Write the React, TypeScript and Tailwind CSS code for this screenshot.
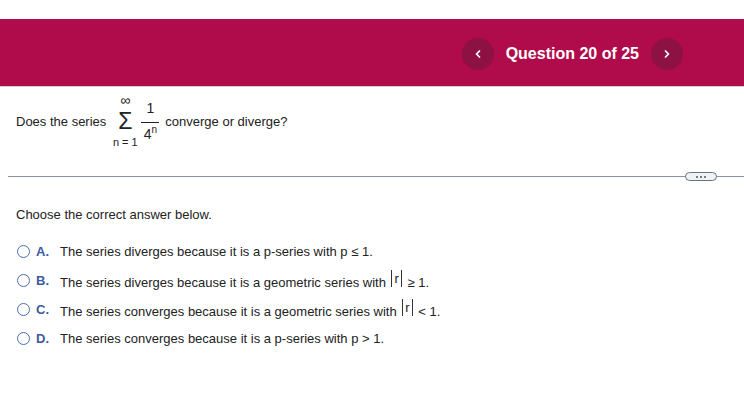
import { ChevronLeft, ChevronRight } from "lucide-react";

const options = [
    { letter: "A.", text: <>The series diverges because it is a p-series with p ≤ 1.</> },
    { letter: "B.", text: <>The series diverges because it is a geometric series with <Abs /> ≥ 1.</> },
    { letter: "C.", text: <>The series converges because it is a geometric series with <Abs /> &lt; 1.</> },
    { letter: "D.", text: <>The series converges because it is a p-series with p &gt; 1.</> },
];

function Abs() {
    return (
        <span className="inline-flex items-center">
            <span className="inline-block w-px h-[17px] bg-[#333] mx-[2px]" />
            r
            <span className="inline-block w-px h-[17px] bg-[#333] mx-[2px]" />
        </span>
    );
}

export default function App() {
    return (
        <div className="w-[744px] h-[408px] bg-white font-['Liberation_Sans',Arial,sans-serif] text-[#222]">
            <div className="h-[19px]" />
            <header className="h-[68px] bg-[#b00b4a] border-b border-[#cfcfd4] flex items-center justify-end pr-[61px] pt-[2px]">
                <button className="w-[32px] h-[32px] rounded-full bg-[#8e1143] flex items-center justify-center text-white">
                    <ChevronLeft size={12} strokeWidth={3.5} />
                </button>
                <span className="mx-[12px] text-white font-bold text-[16px]">Question 20 of 25</span>
                <button className="w-[32px] h-[32px] rounded-full bg-[#8e1143] flex items-center justify-center text-white">
                    <ChevronRight size={12} strokeWidth={3.5} />
                </button>
            </header>

            <div className="flex items-start pl-[16px] text-[13px] h-[89px]">
                <span className="mt-[27px] leading-[16px]">Does the series</span>
                <span className="inline-flex flex-col items-center ml-[7px] w-[24px] mt-[5px]">
                    <span className="text-[14px] leading-[16px]">∞</span>
                    <span className="text-[23px] leading-[26px]">Σ</span>
                    <span className="text-[11px] leading-[13px] mt-[2px] whitespace-nowrap">n = 1</span>
                </span>
                <span className="inline-flex flex-col items-center ml-[4px] w-[18px] mt-[14px] text-[14px]">
                    <span className="leading-[14px]">1</span>
                    <span className="w-full h-px bg-[#222] mt-[7px]" />
                    <span className="leading-[14px] mt-[4px] flex items-start">
                        4<span className="text-[10px] leading-[10px] -mt-[2px]">n</span>
                    </span>
                </span>
                <span className="ml-[6px] mt-[27px] leading-[16px]">converge or diverge?</span>
            </div>

            <div className="relative ml-[8px] h-px bg-[#8a92a6]">
                <div className="absolute left-[677px] -top-[4px] w-[32px] h-[9px] rounded-full border border-[#6b7280] bg-[#eef1f6] flex items-center justify-center gap-[2px]">
                    <span className="w-[2px] h-[2px] bg-[#555] rounded-full" />
                    <span className="w-[2px] h-[2px] bg-[#555] rounded-full" />
                    <span className="w-[2px] h-[2px] bg-[#555] rounded-full" />
                </div>
            </div>

            <div className="pl-[16px] pt-[28px] text-[13px]">Choose the correct answer below.</div>

            <div className="pt-[19px] flex flex-col gap-[13px] text-[13px]">
                {options.map((o) => (
                    <div key={o.letter} className="flex items-center h-[16px] pl-[17px]">
                        <span className="w-[13px] h-[13px] rounded-full border-[1.5px] border-[#4a6fb5]" />
                        <span className="ml-[6px] w-[24px] font-bold text-[#3c5ba0]">{o.letter}</span>
                        <span>{o.text}</span>
                    </div>
                ))}
            </div>
        </div>
    );
}
